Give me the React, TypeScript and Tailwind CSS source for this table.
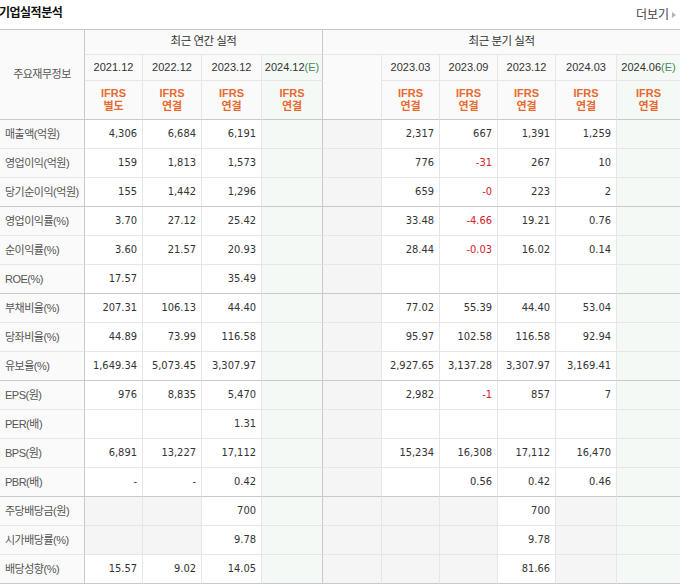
import React from 'react';

type Cell = string | null; // null = gray "no data" cell

interface Row {
  label: string;
  annual: Cell[];
  quarter: Cell[];
  groupEnd?: boolean;
}

const annualCols = ['2021.12', '2022.12', '2023.12', '2024.12'];
const annualType = ['별도', '연결', '연결', '연결'];
const quarterCols = ['2023.03', '2023.09', '2023.12', '2024.03', '2024.06'];

const rows: Row[] = [
  { label: '매출액(억원)', annual: ['4,306', '6,684', '6,191', ''], quarter: ['2,317', '667', '1,391', '1,259', ''] },
  { label: '영업이익(억원)', annual: ['159', '1,813', '1,573', ''], quarter: ['776', '-31', '267', '10', ''] },
  { label: '당기순이익(억원)', annual: ['155', '1,442', '1,296', ''], quarter: ['659', '-0', '223', '2', ''], groupEnd: true },
  { label: '영업이익률(%)', annual: ['3.70', '27.12', '25.42', ''], quarter: ['33.48', '-4.66', '19.21', '0.76', ''] },
  { label: '순이익률(%)', annual: ['3.60', '21.57', '20.93', ''], quarter: ['28.44', '-0.03', '16.02', '0.14', ''] },
  { label: 'ROE(%)', annual: ['17.57', '', '35.49', ''], quarter: ['', '', '', '', ''], groupEnd: true },
  { label: '부채비율(%)', annual: ['207.31', '106.13', '44.40', ''], quarter: ['77.02', '55.39', '44.40', '53.04', ''] },
  { label: '당좌비율(%)', annual: ['44.89', '73.99', '116.58', ''], quarter: ['95.97', '102.58', '116.58', '92.94', ''] },
  { label: '유보율(%)', annual: ['1,649.34', '5,073.45', '3,307.97', ''], quarter: ['2,927.65', '3,137.28', '3,307.97', '3,169.41', ''], groupEnd: true },
  { label: 'EPS(원)', annual: ['976', '8,835', '5,470', ''], quarter: ['2,982', '-1', '857', '7', ''] },
  { label: 'PER(배)', annual: ['', '', '1.31', ''], quarter: ['', '', '', '', ''] },
  { label: 'BPS(원)', annual: ['6,891', '13,227', '17,112', ''], quarter: ['15,234', '16,308', '17,112', '16,470', ''] },
  { label: 'PBR(배)', annual: ['-', '-', '0.42', ''], quarter: ['', '0.56', '0.42', '0.46', ''], groupEnd: true },
  { label: '주당배당금(원)', annual: [null, null, '700', ''], quarter: [null, null, '700', null, ''] },
  { label: '시가배당률(%)', annual: [null, null, '9.78', ''], quarter: [null, null, '9.78', null, ''] },
  { label: '배당성향(%)', annual: ['15.57', '9.02', '14.05', ''], quarter: [null, null, '81.66', null, ''], groupEnd: true },
];

const kr = { fontFamily: '"Liberation Sans", "Noto Sans CJK KR", sans-serif' };
const num = { fontFamily: '"DejaVu Sans Condensed", "DejaVu Sans", sans-serif' };

const isNeg = (v: Cell) => !!v && v.startsWith('-') && v !== '-';

const Estimate = ({ text }: { text: string }) => (
  <>
    {text}
    <span className="text-[#4b8a57]">(E)</span>
  </>
);

const IfrsHead = ({ type }: { type: string }) => (
  <div className="flex flex-col items-center font-bold text-[11px] leading-[13px] text-[#e8692f]">
    <span>IFRS</span>
    <span>{type}</span>
  </div>
);

export default function App() {
  return (
    <div className="w-[680px] bg-white" style={kr}>
      <div className="flex h-[29px] items-center justify-between">
        <h3 className="-ml-[1px] -mt-[3px] text-[12px] font-bold tracking-[-0.5px] text-[#111]">기업실적분석</h3>
        <a className="mr-[4px] flex items-center gap-[3px] text-[12px] text-[#444]">
          더보기
          <span className="h-0 w-0 border-y-[3.5px] border-l-[4px] border-y-transparent border-l-[#b5b5b5]" />
        </a>
      </div>
      <table className="w-[680px] table-fixed border-separate border-spacing-0 text-[11px]">
        <colgroup>
          <col className="w-[85px]" />
          <col className="w-[58px]" />
          <col className="w-[59px]" />
          <col className="w-[60px]" />
          <col className="w-[61px]" />
          <col className="w-[59px]" />
          <col className="w-[58px]" />
          <col className="w-[58px]" />
          <col className="w-[58px]" />
          <col className="w-[61px]" />
          <col className="w-[63px]" />
        </colgroup>
        <thead>
          <tr>
            <th
              rowSpan={3}
              className="border-y border-r border-t-[#c6c6c6] border-b-[#c9c9c9] border-r-[#c9c9c9] bg-[#fafafa] text-[11px] font-normal tracking-[-0.5px] text-[#555]"
            >
              주요재무정보
            </th>
            <th
              colSpan={4}
              className="h-[26px] border-y border-r border-t-[#c6c6c6] border-b-[#e6e6e6] border-r-[#c9c9c9] bg-[#fafafa] text-[11.5px] font-normal tracking-[-0.5px] text-[#333]"
            >
              최근 연간 실적
            </th>
            <th
              colSpan={6}
              className="h-[26px] border-y border-t-[#c6c6c6] border-b-[#e6e6e6] bg-[#fafafa] text-[11.5px] font-normal tracking-[-0.5px] text-[#333]"
            >
              최근 분기 실적
            </th>
          </tr>
          <tr>
            {annualCols.map((c, i) => (
              <th
                key={c}
                className={`h-[26px] border-b border-r border-b-[#e6e6e6] text-[11px] font-normal text-[#333] ${
                  i === 3 ? 'border-r-[#c9c9c9] bg-[#f4f9f5]' : 'border-r-[#e6e6e6] bg-[#fafafa]'
                }`}
              >
                {i === 3 ? <Estimate text={c} /> : c}
              </th>
            ))}
            <th rowSpan={2} className="border-b border-r border-b-[#c9c9c9] border-r-[#e6e6e6] bg-[#fafafa]" />
            {quarterCols.map((c, i) => (
              <th
                key={'q' + c}
                className={`h-[26px] border-b border-b-[#e6e6e6] text-[11px] font-normal text-[#333] ${
                  i === 4 ? 'bg-[#f4f9f5]' : 'border-r border-r-[#e6e6e6] bg-[#fafafa]'
                }`}
              >
                {i === 4 ? <Estimate text={c} /> : c}
              </th>
            ))}
          </tr>
          <tr>
            {annualType.map((t, i) => (
              <th
                key={'a' + i}
                className={`h-[39px] border-b border-r border-b-[#c9c9c9] ${
                  i === 3 ? 'border-r-[#c9c9c9] bg-[#f4f9f5]' : 'border-r-[#e6e6e6] bg-[#fafafa]'
                }`}
              >
                <IfrsHead type={t} />
              </th>
            ))}
            {quarterCols.map((c, i) => (
              <th
                key={'t' + c}
                className={`h-[39px] border-b border-b-[#c9c9c9] ${
                  i === 4 ? 'bg-[#f4f9f5]' : 'border-r border-r-[#e6e6e6] bg-[#fafafa]'
                }`}
              >
                <IfrsHead type="연결" />
              </th>
            ))}
          </tr>
        </thead>
        <tbody>
          {rows.map((r) => {
            const line = r.groupEnd ? 'border-b-[#c9c9c9]' : 'border-b-[#e6e6e6]';
            return (
              <tr key={r.label}>
                <td
                  className={`h-[29px] border-b border-r border-r-[#c9c9c9] bg-[#fafafa] pl-[5px] text-left text-[11px] tracking-[-0.5px] text-[#555] ${line}`}
                >
                  {r.label}
                </td>
                {r.annual.map((v, i) => (
                  <td
                    key={'a' + i}
                    style={num}
                    className={`h-[29px] border-b border-r pr-[5px] text-right text-[11px] ${line} ${
                      i === 3 ? 'border-r-[#c9c9c9] bg-[#f4f9f5]' : 'border-r-[#e6e6e6]'
                    } ${v === null ? 'bg-[#f5f5f5]' : i === 3 ? '' : 'bg-white'} ${
                      isNeg(v) ? 'text-[#d4202a]' : 'text-[#333]'
                    }`}
                  >
                    {v}
                  </td>
                ))}
                <td className={`h-[29px] border-b border-r border-r-[#e6e6e6] bg-[#f5f5f5] ${line}`} />
                {r.quarter.map((v, i) => (
                  <td
                    key={'q' + i}
                    style={num}
                    className={`h-[29px] border-b pr-[5px] text-right text-[11px] ${line} ${
                      i === 4 ? 'bg-[#f4f9f5]' : 'border-r border-r-[#e6e6e6]'
                    } ${v === null ? 'bg-[#f5f5f5]' : i === 4 ? '' : 'bg-white'} ${
                      isNeg(v) ? 'text-[#d4202a]' : 'text-[#333]'
                    }`}
                  >
                    {v}
                  </td>
                ))}
              </tr>
            );
          })}
        </tbody>
      </table>
    </div>
  );
}
